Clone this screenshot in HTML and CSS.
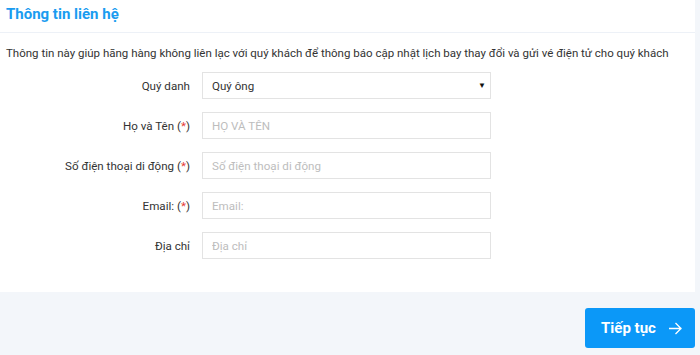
FILE: index.html
```html
<!DOCTYPE html>
<html lang="vi">
<head>
  <meta charset="UTF-8">
  <meta name="viewport" content="width=device-width, initial-scale=1.0">
  <title>Thông tin liên hệ</title>
  <link rel="stylesheet" href="styles.css">
</head>
<body>
  <div class="card">
    <h2 class="card-title">Thông tin liên hệ</h2>
    <div class="card-body">
      <p class="intro">Thông tin này giúp hãng hàng không liên lạc với quý khách để thông báo cập nhật lịch bay thay đổi và gửi vé điện tử cho quý khách</p>

      <form class="contact-form">
        <div class="row">
          <label for="title">Quý danh</label>
          <div class="select">
            <span>Quý ông</span>
            <span class="caret">&#9660;</span>
          </div>
        </div>
        <div class="row">
          <label for="name">Họ và Tên (<span class="req">*</span>)</label>
          <input type="text" id="name" placeholder="HỌ VÀ TÊN">
        </div>
        <div class="row">
          <label for="phone">Số điện thoại di động (<span class="req">*</span>)</label>
          <input type="text" id="phone" placeholder="Số điện thoại di động">
        </div>
        <div class="row">
          <label for="email">Email: (<span class="req">*</span>)</label>
          <input type="text" id="email" placeholder="Email:">
        </div>
        <div class="row">
          <label for="address">Địa chỉ</label>
          <input type="text" id="address" placeholder="Địa chỉ">
        </div>
      </form>
    </div>
  </div>

  <div class="actions">
    <button type="button" class="next">Tiếp tục
      <svg width="15" height="13" viewBox="0 0 15 13"><path d="M1 6.5h12.5M7.5 1 13 6.5 7.5 12" fill="none" stroke="#fff" stroke-width="1.3"/></svg>
    </button>
  </div>
</body>
</html>
```

FILE: styles.css
```css
body {
  font-family: Roboto, 'Liberation Sans', sans-serif;
  margin: 0;
  padding: 0;
  background-color: #f3f6fa;
  color: #333;
}

.card {
  width: 695px;
  height: 292px;
  background-color: #fff;
  box-sizing: border-box;
}

.card-title {
  margin: 0;
  height: 33px;
  padding: 5px 0 0 6px;
  box-sizing: border-box;
  font-size: 15px;
  font-weight: bold;
  color: #1a9cf0;
  border-bottom: 1px solid #edf1f7;
}

.card-body {
  padding: 0 0 0 6px;
}

.intro {
  margin: 13px 0 12px;
  font-size: 11.5px;
  line-height: 14px;
  white-space: nowrap;
}

.contact-form {
  display: grid;
  gap: 13px;
}

.row {
  display: flex;
  align-items: center;
  height: 27px;
}

label {
  width: 184px;
  text-align: right;
  font-size: 11.6px;
  padding-right: 12px;
}

.req {
  color: #e53935;
  font-weight: normal;
}

input, .select {
  width: 289px;
  height: 27px;
  box-sizing: border-box;
  border: 1px solid #e3e3e3;
  padding: 0 9px;
  font-family: inherit;
  font-size: 11.6px;
  color: #333;
  outline: none;
}

input::placeholder {
  color: #bdbdbd;
}

.select {
  display: flex;
  align-items: center;
  justify-content: space-between;
  padding-right: 4px;
}

.caret {
  font-size: 8px;
  color: #111;
}

.actions {
  display: flex;
  justify-content: flex-end;
  padding: 16px 5px 0 0;
}

.next {
  width: 110px;
  height: 40px;
  display: flex;
  align-items: center;
  justify-content: center;
  gap: 12px;
  background-color: #0b98f8;
  color: #fff;
  border: none;
  border-radius: 3px;
  font-family: inherit;
  font-size: 15px;
  font-weight: bold;
  cursor: pointer;
  padding: 0 0 0 4px;
}
```
